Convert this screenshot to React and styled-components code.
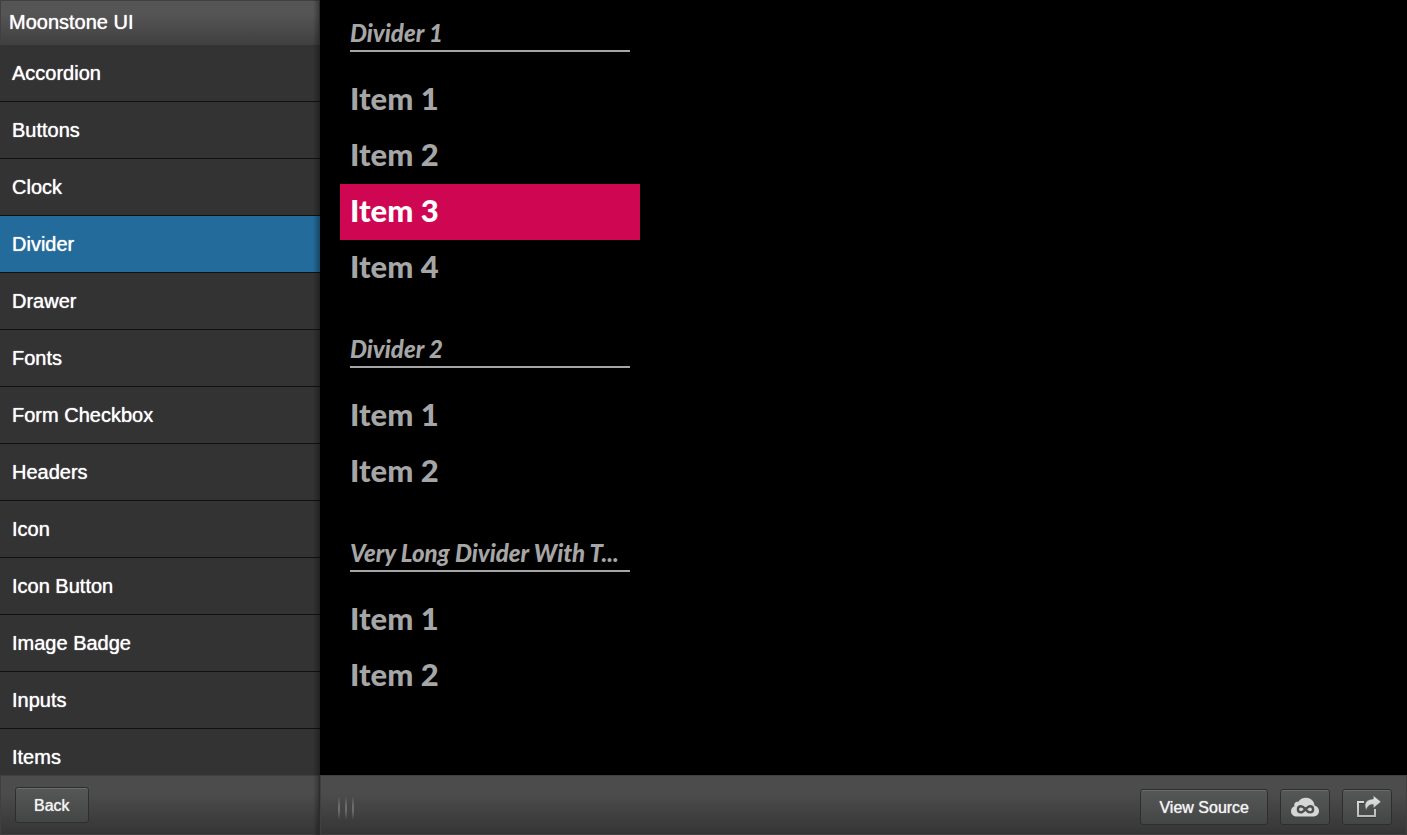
import React, { useState } from 'react';
import styled, { createGlobalStyle } from 'styled-components';

const GlobalStyle = createGlobalStyle`
  * {
    box-sizing: border-box;
  }

  body {
    margin: 0;
    background: #000;
    font-family: "Liberation Sans", Arial, sans-serif;
  }
`;

const Layout = styled.div`
  display: flex;
  height: 100vh;
  overflow: hidden;
`;

const Sidebar = styled.aside`
  position: relative;
  flex: 0 0 320px;
  display: flex;
  flex-direction: column;
  background: #333;

  &::after {
    content: "";
    position: absolute;
    top: 0;
    right: 0;
    bottom: 0;
    width: 7px;
    background: linear-gradient(to right, rgba(0, 0, 0, 0), rgba(0, 0, 0, 0.35));
    pointer-events: none;
  }
`;

const SidebarHeader = styled.header`
  flex: none;
  height: 45px;
  padding: 0 8px;
  border: 1px solid #404040;
  background: linear-gradient(#555, #555 30%, #404040);
`;

const SidebarTitle = styled.h1`
  margin: 0;
  font-size: 20px;
  line-height: 42px;
  font-weight: normal;
  color: #fff;
  text-shadow: 0 0 1px #fff;
`;

const SampleList = styled.nav`
  flex: 1;
  min-height: 0;
  overflow: hidden;
`;

const SampleLink = styled.a`
  display: block;
  padding: 0 12px;
  border-bottom: 1px solid #111;
  font-size: 20px;
  line-height: 56px;
  color: #fff;
  text-decoration: none;
  text-shadow: 0 0 1px #fff;
  background: ${props => (props.$active ? '#226b9a' : '#333')};
`;

const Toolbar = styled.footer`
  flex: none;
  display: flex;
  align-items: ${props => props.$align || 'center'};
  gap: 12px;
  height: 60px;
  padding: ${props => props.$padding || '0 14px'};
  border: 1px solid #404040;
  background: linear-gradient(#4c4c4c, #4c4c4c 30%, #353535);
`;

const Button = styled.button`
  display: flex;
  align-items: center;
  justify-content: center;
  height: 36px;
  min-width: 50px;
  padding: ${props => (props.$icon ? '0' : '2px 18px 0')};
  border: 1px solid #2e2e2e;
  border-radius: 3px;
  background: linear-gradient(#555857, #434645);
  box-shadow: inset 0 1px 0 #6b6d6c;
  font-family: inherit;
  font-size: 16px;
  color: #f2f2f2;
  text-shadow: 0 0 1px #f2f2f2;
`;

const Content = styled.div`
  flex: 1;
  min-width: 0;
  display: flex;
  flex-direction: column;
`;

const Stage = styled.main`
  flex: 1;
  min-height: 0;
  overflow: hidden;
  padding: 18px 20px;
  display: flex;
  flex-direction: column;
  gap: 38px;
  background: #000;
  font-family: Lato, sans-serif;
  color: #a6a6a6;
`;

const Group = styled.section`
  width: 300px;
  max-width: 100%;
`;

const Divider = styled.h2`
  height: 34px;
  margin: 0 10px 20px;
  border-bottom: 2px solid #a6a6a6;
  font-size: 24px;
  line-height: 30px;
  font-weight: 900;
  font-style: italic;
  overflow: hidden;
  text-overflow: ellipsis;
  white-space: nowrap;
`;

const Item = styled.button`
  display: block;
  width: 100%;
  height: 56px;
  padding: 0 10px 5px;
  border: none;
  outline: none;
  font-family: inherit;
  font-size: 31px;
  font-weight: 900;
  text-align: left;
  color: ${props => (props.$spotlight ? '#fff' : 'inherit')};
  background: ${props => (props.$spotlight ? '#cf0652' : 'transparent')};
`;

const Grabber = styled.span`
  display: flex;
  gap: 5px;
  margin: 7px auto 0 0;
`;

const GrabberBar = styled.i`
  width: 2px;
  height: 24px;
  background: linear-gradient(rgba(120, 120, 120, 0), #6c6c6c 40%, #6c6c6c 60%, rgba(120, 120, 120, 0));
`;

const samples = [
  'Accordion',
  'Buttons',
  'Clock',
  'Divider',
  'Drawer',
  'Fonts',
  'Form Checkbox',
  'Headers',
  'Icon',
  'Icon Button',
  'Image Badge',
  'Inputs',
  'Items',
];

const groups = [
  { title: 'Divider 1', items: ['Item 1', 'Item 2', 'Item 3', 'Item 4'] },
  { title: 'Divider 2', items: ['Item 1', 'Item 2'] },
  { title: 'Very Long Divider With T...', items: ['Item 1', 'Item 2'] },
];

const CloudIcon = () => (
  <svg width="28" height="20" viewBox="0 0 28 20" aria-hidden="true">
    <path
      fill="#d6d6d6"
      d="M6 19.5C2.6 19.5 0 17.3 0 14.2C0 11.7 1.4 10 3.5 9.3C2.6 6.5 4.5 4.3 7.4 4.7C9 1.9 12 .5 15.500 .7C20 1 23.3 4.2 23.5 8.5C26.2 9.3 28 11.3 28 14C28 17.3 25.5 19.5 22 19.5Z"
    />
    <path
      fill="none"
      stroke="#4c4f4e"
      strokeWidth="2.4"
      d="M14.5 12.3C13 10.3 11.7 9.2 10 9.2C8 9.2 6.9 10.6 6.9 12.3C6.9 14 8 15.4 10 15.4C13 15.4 15.8 9.2 19 9.2C21 9.2 22.100 10.6 22.1 12.3C22.1 14 21 15.4 19 15.4C17.3 15.4 16 14.3 14.5 12.3Z"
    />
  </svg>
);

const ShareIcon = () => (
  <svg width="28" height="24" viewBox="-2 0 28 24" aria-hidden="true">
    <defs>
      <linearGradient id="share-fill" x1="0" y1="0" x2="0" y2="24" gradientUnits="userSpaceOnUse">
        <stop offset="0" stopColor="#e6e6e6" />
        <stop offset="1" stopColor="#b4b4b4" />
      </linearGradient>
    </defs>
    <path d="M9 8H3V22H20V15" fill="none" stroke="#2c2e2d" strokeWidth="2" opacity="0.6" />
    <path d="M9 7H3V21H20V14" fill="none" stroke="url(#share-fill)" strokeWidth="2" />
    <path
      d="M11.3 15.3C8 8.5 11.5 4.2 18.300 4V0.6L26 6.8L18.3 13.2V9.6C14.5 9.4 12.300 11.300 11.300 15.300Z"
      fill="url(#share-fill)"
      stroke="#4c4f4e"
      strokeWidth="0.5"
    />
  </svg>
);

const App = () => {
  const [sample, setSample] = useState('Divider');
  const [spot, setSpot] = useState('Divider 1/Item 3');

  return (
    <Layout>
      <GlobalStyle />
      <Sidebar>
        <SidebarHeader>
          <SidebarTitle>Moonstone UI</SidebarTitle>
        </SidebarHeader>
        <SampleList>
          {samples.map(name => (
            <SampleLink
              key={name}
              href="#"
              $active={name === sample}
              onClick={() => setSample(name)}
            >
              {name}
            </SampleLink>
          ))}
        </SampleList>
        <Toolbar>
          <Button type="button">Back</Button>
        </Toolbar>
      </Sidebar>

      <Content>
        <Stage>
          {groups.map(group => (
            <Group key={group.title}>
              <Divider>{group.title}</Divider>
              {group.items.map(item => {
                const id = `${group.title}/${item}`;
                return (
                  <Item
                    key={id}
                    type="button"
                    $spotlight={id === spot}
                    onMouseEnter={() => setSpot(id)}
                  >
                    {item}
                  </Item>
                );
              })}
            </Group>
          ))}
        </Stage>
        <Toolbar $align="flex-start" $padding="13px 14px 0 17px">
          <Grabber>
            <GrabberBar />
            <GrabberBar />
            <GrabberBar />
          </Grabber>
          <Button type="button">View Source</Button>
          <Button type="button" $icon aria-label="Open in the cloud">
            <CloudIcon />
          </Button>
          <Button type="button" $icon aria-label="Share">
            <ShareIcon />
          </Button>
        </Toolbar>
      </Content>
    </Layout>
  );
};

export default App;
